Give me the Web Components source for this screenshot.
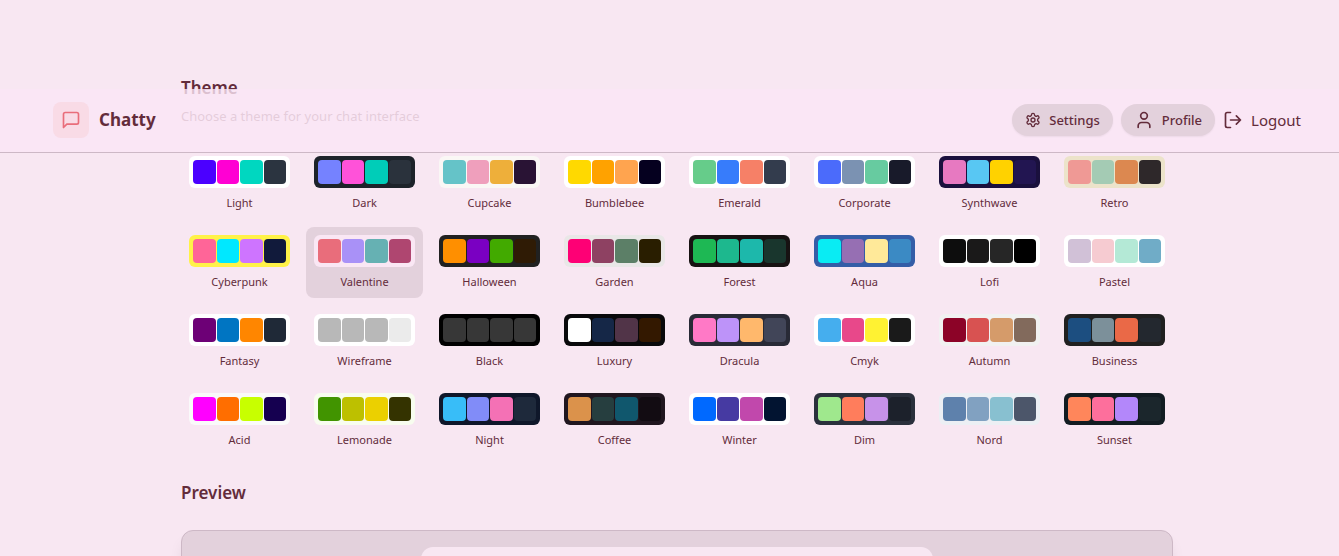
<!DOCTYPE html>
<html lang="en">
<head>
<meta charset="utf-8">
<title>Chatty – Settings</title>
<style>
  body { margin: 0; background: #f8e7f2; color: #632c3b; font-family: "Noto Sans", "Open Sans", sans-serif; font-size: 15px; line-height: 24px; }
</style>
</head>
<body>
<chatty-app></chatty-app>
<script>
const define = (name, html, setup) => customElements.define(name, class extends HTMLElement {
  connectedCallback() {
    if (this.shadowRoot) return;
    const root = this.attachShadow({ mode: "open" });
    const t = document.createElement("template");
    t.innerHTML = html;
    root.append(t.content.cloneNode(true));
    if (setup) setup(this, root);
  }
});

const icons = {
  message: '<path d="M21 15a2 2 0 0 1-2 2H7l-4 4V5a2 2 0 0 1 2-2h14a2 2 0 0 1 2 2z"/>',
  settings: '<path d="M12.22 2h-.44a2 2 0 0 0-2 2v.18a2 2 0 0 1-1 1.73l-.43.25a2 2 0 0 1-2 0l-.15-.08a2 2 0 0 0-2.73.73l-.22.38a2 2 0 0 0 .73 2.73l.15.1a2 2 0 0 1 1 1.72v.51a2 2 0 0 1-1 1.74l-.15.09a2 2 0 0 0-.73 2.73l.22.38a2 2 0 0 0 2.73.73l.15-.08a2 2 0 0 1 2 0l.43.25a2 2 0 0 1 1 1.73V20a2 2 0 0 0 2 2h.44a2 2 0 0 0 2-2v-.18a2 2 0 0 1 1-1.73l.43-.25a2 2 0 0 1 2 0l.15.08a2 2 0 0 0 2.73-.73l.22-.39a2 2 0 0 0-.73-2.73l-.15-.08a2 2 0 0 1-1-1.74v-.5a2 2 0 0 1 1-1.74l.15-.09a2 2 0 0 0 .73-2.73l-.22-.38a2 2 0 0 0-2.73-.73l-.15.08a2 2 0 0 1-2 0l-.43-.25a2 2 0 0 1-1-1.73V4a2 2 0 0 0-2-2z"/><circle cx="12" cy="12" r="3"/>',
  user: '<path d="M19 21v-2a4 4 0 0 0-4-4H9a4 4 0 0 0-4 4v2"/><circle cx="12" cy="7" r="4"/>',
  logout: '<path d="M9 21H5a2 2 0 0 1-2-2V5a2 2 0 0 1 2-2h4M16 17l5-5-5-5M21 12H9"/>'
};

define("line-icon", `
<style>
  :host { display: block; flex: none; width: 20px; height: 20px; }
  svg { display: block; width: 100%; height: 100%; fill: none; stroke: currentColor; stroke-width: 2; stroke-linecap: round; stroke-linejoin: round; }
</style>
<svg viewBox="0 0 24 24" aria-hidden="true"></svg>`,
(el, root) => { root.querySelector("svg").innerHTML = icons[el.getAttribute("name")]; });

define("pill-link", `
<style>
  :host { display: block; }
  a { display: flex; align-items: center; gap: 8px; box-sizing: border-box; height: 32px; padding: 0 13px; border-radius: 16px; background: #e3d1dc; box-shadow: 0 1px 2px rgb(0 0 0 / .06); color: inherit; text-decoration: none; font-size: 13px; line-height: 20px; font-weight: 500; }
</style>
<a href="#"><slot name="icon"></slot><slot></slot></a>`);

define("nav-bar", `
<style>
  :host { display: block; background: rgb(250 230 245 / .8); border-bottom: 1px solid #cdb8c6; }
  .inner { box-sizing: border-box; max-width: 1280px; height: 63px; margin: 0 auto; padding: 0 16px 1px; display: flex; align-items: center; justify-content: space-between; }
  .brand { display: flex; align-items: center; gap: 10px; color: inherit; text-decoration: none; font-size: 17px; line-height: 28px; font-weight: 700; }
  .mark { display: grid; place-items: center; width: 36px; height: 36px; border-radius: 8px; background: #f9dbe6; color: #e96d7b; }
  nav { display: flex; align-items: center; gap: 8px; }
  .small { width: 16px; height: 16px; }
  button { display: flex; align-items: center; gap: 8px; padding: 0; border: 0; background: none; color: inherit; font: inherit; }
</style>
<div class="inner">
  <a class="brand" href="#"><span class="mark"><line-icon name="message"></line-icon></span><span>Chatty</span></a>
  <nav>
    <pill-link><line-icon slot="icon" class="small" name="settings"></line-icon>Settings</pill-link>
    <pill-link><line-icon slot="icon" name="user"></line-icon>Profile</pill-link>
    <button type="button"><line-icon name="logout"></line-icon><span>Logout</span></button>
  </nav>
</div>`);

define("theme-option", `
<style>
  :host { display: block; }
  button { display: flex; flex-direction: column; gap: 6px; box-sizing: border-box; width: 100%; padding: 8px; border: 0; border-radius: 8px; background: none; color: inherit; font: inherit; font-size: 11px; line-height: 17px; text-align: center; }
  :host([selected]) button { background: #e3d1dc; }
  .swatch { display: grid; grid-template-columns: repeat(4, 1fr); gap: 1px; box-sizing: border-box; width: 100%; height: 32px; padding: 4px; border-radius: 6px; }
  i { border-radius: 4px; }
  .label { width: 100%; }
</style>
<button type="button"><span class="swatch"><i></i><i></i><i></i><i></i></span><span class="label"><slot></slot></span></button>`,
(el, root) => {
  const [base, ...colors] = el.getAttribute("colors").split(" ");
  root.querySelector(".swatch").style.background = base;
  root.querySelectorAll("i").forEach((c, n) => { c.style.background = colors[n]; });
  root.querySelector("button").setAttribute("aria-pressed", el.hasAttribute("selected"));
});

const themes = `Light #ffffff #4b00ff #ff00d3 #00d7c0 #2b3440
Dark #1d232a #7582ff #ff52d9 #00cdb8 #2a323c
Cupcake #faf7f5 #65c3c8 #ef9fbc #eeaf3a #291334
Bumblebee #ffffff #ffd900 #ffa200 #ffa44f #05001f
Emerald #ffffff #66cc8a #377cfb #f68067 #333c4d
Corporate #ffffff #4b6bfb #7b92b2 #67cba0 #181a2a
Synthwave #1a103d #e779c1 #58c7f3 #ffd200 #221551
Retro #ece3ca #ef9995 #a4cbb4 #dc8850 #2e282a
Cyberpunk #fff248 #ff6598 #00e8ff #ce74ff #111a3b
Valentine #fae7f4 #e96d7b #a991f7 #66b1b3 #af4670
Halloween #212121 #ff8f00 #7a00c2 #42aa00 #2f1b05
Garden #e9e7e7 #fe0075 #8e4162 #5c7f67 #291e00
Forest #171212 #1eb854 #1db88e #1db8ab #19362d
Aqua #345da7 #09ecf3 #966fb3 #ffe999 #3b8ac4
Lofi #ffffff #0d0d0d #1a1919 #262626 #000000
Pastel #ffffff #d1c1d7 #f6cbd1 #b4e9d6 #70acc7
Fantasy #ffffff #6d0076 #0075c2 #ff8600 #1f2937
Wireframe #ffffff #b8b8b8 #b8b8b8 #b8b8b8 #ebebeb
Black #000000 #373737 #373737 #373737 #373737
Luxury #09090b #ffffff #152747 #513448 #331800
Dracula #282a36 #ff79c6 #bd93f9 #ffb86c #414558
Cmyk #ffffff #45aeee #e8488a #fff232 #1a1a1a
Autumn #f1f1f1 #8c0327 #d85251 #d59b6a #826a5c
Business #202020 #1c4e80 #7c909a #ea6947 #23282f
Acid #fafafa #ff00ff #ff6e00 #c8ff00 #150050
Lemonade #f8fdef #419400 #bdc000 #ebd000 #343300
Night #0f172a #38bdf8 #818cf8 #f471b5 #1e293b
Coffee #20161f #db924b #263e3f #10576d #120c12
Winter #ffffff #0069ff #463aa2 #c148ac #021431
Dim #2a303c #9fe88d #ff7d5c #c792e9 #1c212b
Nord #eceff4 #5e81ac #81a1c1 #88c0d0 #4c566a
Sunset #121c22 #ff865b #fd6f9c #b387fa #1b262c`;

define("theme-grid", `
<style>
  :host { display: grid; grid-template-columns: repeat(8, 1fr); gap: 8px; }
</style>`,
(el, root) => themes.split("\n").forEach(line => {
  const [name, ...colors] = line.split(" ");
  const option = document.createElement("theme-option");
  option.setAttribute("colors", colors.join(" "));
  option.toggleAttribute("selected", name === "Valentine");
  option.textContent = name;
  root.append(option);
}));

define("section-title", `
<style>
  :host { display: flex; flex-direction: column; gap: 5px; }
  h2 { margin: 0; font-size: 17px; line-height: 28px; font-weight: 600; }
  ::slotted(p) { margin: 0; font-size: 13px; line-height: 18px; opacity: .7; }
</style>
<h2><slot></slot></h2><slot name="note"></slot>`);

define("preview-panel", `
<style>
  :host { display: block; padding: 16px; border: 1px solid #cdb8c6; border-radius: 12px; background: #e3d1dc; box-shadow: 0 10px 15px -3px rgb(0 0 0 / .1); }
  .chat { box-sizing: border-box; max-width: 512px; min-height: 320px; margin: 0 auto; border-radius: 12px; background: #f8e7f2; }
</style>
<div class="chat"></div>`);

define("chatty-app", `
<style>
  :host { display: block; position: relative; box-sizing: border-box; height: 100vh; overflow: hidden; padding-left: 15px; }
  nav-bar { position: absolute; top: 89px; left: 0; right: 0; padding-left: 15px; }
  main { box-sizing: border-box; max-width: 1024px; margin: 0 auto; padding: 74px 16px 32px; display: flex; flex-direction: column; gap: 23px; }
</style>
<main>
  <section-title>Theme<p slot="note">Choose a theme for your chat interface</p></section-title>
  <theme-grid></theme-grid>
  <section-title>Preview</section-title>
  <preview-panel></preview-panel>
</main>
<nav-bar></nav-bar>`);
</script>
</body>
</html>
